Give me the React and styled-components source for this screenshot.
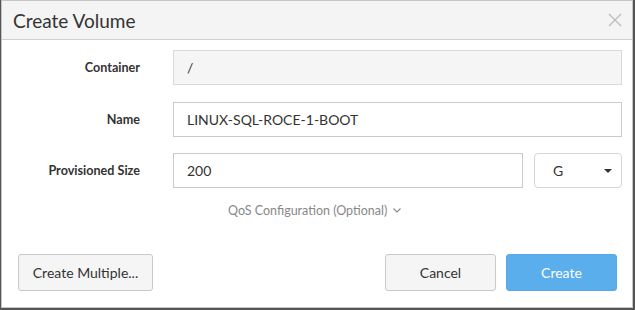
import React from 'react';
import styled, { createGlobalStyle } from 'styled-components';

const GlobalStyle = createGlobalStyle`
  body {
    margin: 0;
    background: #555;
    font-family: Lato, "Liberation Sans", sans-serif;
  }
`;

const Dialog = styled.div`
  box-sizing: border-box;
  width: 632px;
  height: 308px;
  margin-left: 1px;
  border: 1px solid #c6c6c6;
  background: #fff;
  display: flex;
  flex-direction: column;
`;

const Header = styled.div`
  box-sizing: border-box;
  height: 39px;
  border-bottom: 1px solid #cfcfcf;
  background: #f4f4f4;
  display: flex;
  align-items: center;
  justify-content: space-between;
  padding: 0 10px 0 11px;
`;

const Title = styled.h1`
  margin: 0;
  font-size: 19px;
  font-weight: 400;
  color: #333;
`;

const Close = styled.button`
  border: 0;
  background: none;
  padding: 0;
  width: 14px;
  height: 14px;
  display: flex;
  cursor: pointer;
`;

const Form = styled.div`
  padding: 10px 10px 0 0;
  display: flex;
  flex-direction: column;
  gap: 16.5px;
`;

const Row = styled.div`
  display: grid;
  grid-template-columns: 138px 1fr;
  column-gap: 33px;
  align-items: center;
`;

const Label = styled.label`
  text-align: right;
  font-size: 12.6px;
  font-weight: 700;
  color: #333;
`;

const Fields = styled.div`
  display: flex;
  gap: 11px;
`;

const Input = styled.input`
  box-sizing: border-box;
  height: 35px;
  flex: 1;
  min-width: 0;
  padding: 0 13px;
  border: 1px solid ${p => (p.disabled ? '#dadada' : '#cacaca')};
  background: ${p => (p.disabled ? '#f5f5f5' : '#fff')};
  font-family: inherit;
  font-size: 14px;
  color: #333;
  outline: none;
`;

const Select = styled.div`
  box-sizing: border-box;
  width: 88px;
  height: 35px;
  border: 1px solid #d6d6d6;
  border-radius: 4px;
  display: flex;
  align-items: center;
  justify-content: space-between;
  padding: 0 9px 0 18px;
  font-size: 14px;
  color: #333;
`;

const Caret = styled.span`
  width: 0;
  height: 0;
  border-left: 4px solid transparent;
  border-right: 4px solid transparent;
  border-top: 4px solid #333;
`;

const Qos = styled.button`
  align-self: flex-start;
  margin: 15px 0 0 226px;
  border: 0;
  background: none;
  padding: 0;
  display: flex;
  align-items: center;
  gap: 6px;
  font-family: inherit;
  font-size: 12.5px;
  color: #888;
  cursor: pointer;
`;

const Footer = styled.div`
  margin-top: auto;
  padding: 0 15px 16px 16px;
  display: flex;
  gap: 10px;
`;

const Button = styled.button`
  box-sizing: border-box;
  height: 37px;
  min-width: ${p => p.$width || 'auto'};
  padding: 0 12px;
  border-radius: 3px;
  border: 1px solid ${p => (p.$primary ? '#55aaea' : '#c9c9c9')};
  background: ${p => (p.$primary ? '#5aaeec' : '#f5f5f5')};
  color: ${p => (p.$primary ? '#fff' : '#333')};
  font-family: inherit;
  font-size: 14px;
  cursor: pointer;
  &:first-child {
    margin-right: auto;
  }
`;

export default function App() {
  return (
    <>
      <GlobalStyle />
      <Dialog>
        <Header>
          <Title>Create Volume</Title>
          <Close aria-label="Close">
            <svg width="14" height="14" viewBox="0 0 14 14">
              <path d="M1 1L13 13M13 1L1 13" stroke="#bdbdbd" strokeWidth="1.4" />
            </svg>
          </Close>
        </Header>
        <Form>
          <Row>
            <Label>Container</Label>
            <Input disabled value="/" readOnly />
          </Row>
          <Row>
            <Label>Name</Label>
            <Input defaultValue="LINUX-SQL-ROCE-1-BOOT" />
          </Row>
          <Row>
            <Label>Provisioned Size</Label>
            <Fields>
              <Input defaultValue="200" />
              <Select>
                G
                <Caret />
              </Select>
            </Fields>
          </Row>
        </Form>
        <Qos>
          QoS Configuration (Optional)
          <svg width="8" height="5" viewBox="0 0 8 5">
            <path d="M0.5 0.5L4 4L7.5 0.5" fill="none" stroke="#888" strokeWidth="1.1" />
          </svg>
        </Qos>
        <Footer>
          <Button $width="135px">Create Multiple...</Button>
          <Button $width="111px">Cancel</Button>
          <Button $width="111px" $primary>Create</Button>
        </Footer>
      </Dialog>
    </>
  );
}
